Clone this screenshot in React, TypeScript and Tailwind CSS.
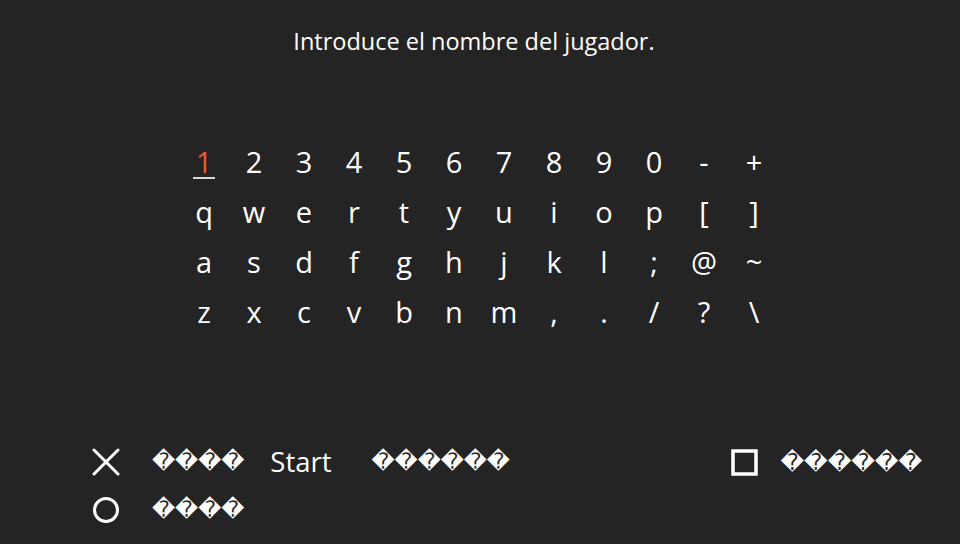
const rows = [
  ['1', '2', '3', '4', '5', '6', '7', '8', '9', '0', '-', '+'],
  ['q', 'w', 'e', 'r', 't', 'y', 'u', 'i', 'o', 'p', '[', ']'],
  ['a', 's', 'd', 'f', 'g', 'h', 'j', 'k', 'l', ';', '@', '~'],
  ['z', 'x', 'c', 'v', 'b', 'n', 'm', ',', '.', '/', '?', '\\'],
];

const junk = (n: number) => '\uFFFD'.repeat(n);

const junkFont = { fontFamily: '"DejaVu Sans", sans-serif' };

function CrossIcon() {
  return (
    <svg width="28" height="28" viewBox="0 0 28 28" className="text-white">
      <path d="M2 2 L26 26 M26 2 L2 26" stroke="currentColor" strokeWidth="3" strokeLinecap="round" />
    </svg>
  );
}

function CircleIcon() {
  return (
    <svg width="28" height="28" viewBox="0 0 28 28" className="text-white">
      <circle cx="14" cy="14" r="11.5" stroke="currentColor" strokeWidth="3" fill="none" />
    </svg>
  );
}

function SquareIcon() {
  return (
    <svg width="27" height="27" viewBox="0 0 27 27" className="text-white">
      <rect x="2" y="2" width="23" height="23" stroke="currentColor" strokeWidth="3.5" fill="none" />
    </svg>
  );
}

export default function App() {
  return (
    <div
      className="w-[960px] h-[544px] bg-[#242424] text-white flex flex-col overflow-hidden"
      style={{ fontFamily: '"Open Sans", "Noto Sans", sans-serif' }}
    >
      {/* Title */}
      <div className="pt-[24px] pr-[12px] text-center text-[23.5px] font-medium leading-[34px]">Introduce el nombre del jugador.</div>

      {/* Keyboard */}
      <div className="mt-[79px] ml-[179px] flex flex-col">
        {rows.map((row, r) => (
          <div key={r} className="flex h-[50px] items-center">
            {row.map((k, c) => (
              <div key={c} className="w-[50px] flex justify-center text-[29px] font-medium leading-[50px]">
                {r === 0 && c === 0 ? (
                  <span className="relative text-[#ee5a2c]">
                    {k}
                    <span className="absolute left-[-3px] right-[-3px] bottom-[8px] h-[2px] bg-[#d8d8d8]" />
                  </span>
                ) : (
                  k
                )}
              </div>
            ))}
          </div>
        ))}
      </div>

      {/* Bottom controls */}
      <div className="mt-auto pb-[20px] pl-[92px] pr-[38px] flex flex-col gap-[20px]">
        <div className="flex items-center h-[28px]">
          <CrossIcon />
          <span className="ml-[32px] text-[22.5px]" style={junkFont}>{junk(4)}</span>
          <span className="ml-[26px] text-[27.5px] font-medium">Start</span>
          <span className="ml-[40px] text-[22.5px]" style={junkFont}>{junk(6)}</span>
          <div className="ml-auto flex items-center">
            <SquareIcon />
            <span className="ml-[22px] text-[23px]" style={junkFont}>{junk(6)}</span>
          </div>
        </div>
        <div className="flex items-center h-[28px]">
          <CircleIcon />
          <span className="ml-[32px] text-[22.5px]" style={junkFont}>{junk(4)}</span>
        </div>
      </div>
    </div>
  );
}
